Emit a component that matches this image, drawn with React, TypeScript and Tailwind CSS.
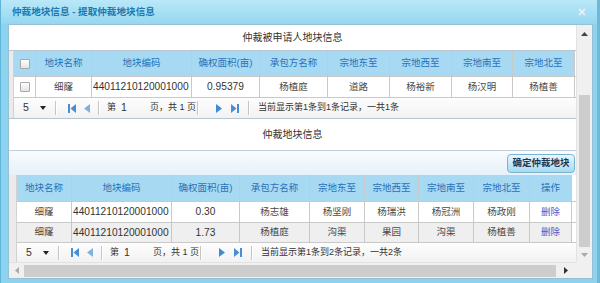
import React from 'react';

const FONT = "font-['Liberation_Sans','Noto_Sans_CJK_SC',sans-serif]";

type Col = { w: string; label: string; num?: boolean; left?: boolean; link?: boolean };

const topCols: Col[] = [
  { w: 'w-[56px]', label: '地块名称' },
  { w: 'w-[100px]', label: '地块编码', num: true, left: true },
  { w: 'w-[68px]', label: '确权面积(亩)', num: true },
  { w: 'w-[68px]', label: '承包方名称' },
  { w: 'w-[62px]', label: '宗地东至' },
  { w: 'w-[62px]', label: '宗地西至' },
  { w: 'w-[61px]', label: '宗地南至' },
  { w: 'w-[62px]', label: '宗地北至' },
];

const bottomCols: Col[] = [
  { w: 'w-[55px]', label: '地块名称' },
  { w: 'w-[100px]', label: '地块编码', num: true, left: true },
  { w: 'w-[68px]', label: '确权面积(亩)', num: true },
  { w: 'w-[70px]', label: '承包方名称' },
  { w: 'w-[55px]', label: '宗地东至' },
  { w: 'w-[54px]', label: '宗地西至' },
  { w: 'w-[55px]', label: '宗地南至' },
  { w: 'w-[56px]', label: '宗地北至' },
  { w: 'w-[42px]', label: '操作', link: true },
];

const topRows = [['细窿', '44011210120001000', '0.95379', '杨植庭', '道路', '杨裕新', '杨汉明', '杨植善']];

const bottomRows = [
  ['细窿', '44011210120001000', '0.30', '杨志雄', '杨坚刚', '杨瑞洪', '杨冠洲', '杨政刚', '删除'],
  ['细窿', '44011210120001000', '1.73', '杨植庭', '沟渠', '果园', '沟渠', '杨植善', '删除'],
];

const CheckBox = () => (
  <div className="w-[10px] h-[10px] border border-[#a8a8a8] rounded-[1px] bg-gradient-to-b from-white to-[#e4e4e4]" />
);

const Sep = ({ className = '' }: { className?: string }) => (
  <div className={`w-[2px] h-[14px] border-l border-l-[#c6c6c6] border-r border-r-white ${className}`} />
);

const FirstIcon = () => (
  <svg width="8" height="9" viewBox="0 0 8 9">
    <rect x="0" y="0" width="2" height="9" fill="#4a8dd4" />
    <polygon points="8,0 8,9 2.5,4.5" fill="#4a8dd4" />
  </svg>
);
const PrevIcon = () => (
  <svg width="7" height="9" viewBox="0 0 7 9">
    <polygon points="7,0 7,9 1,4.5" fill="#7fb1df" />
  </svg>
);
const NextIcon = () => (
  <svg width="7" height="9" viewBox="0 0 7 9">
    <polygon points="0,0 0,9 6,4.5" fill="#3f8bd8" />
  </svg>
);
const LastIcon = () => (
  <svg width="8" height="9" viewBox="0 0 8 9">
    <polygon points="0,0 0,9 5.5,4.5" fill="#4a8dd4" />
    <rect x="6" y="0" width="2" height="9" fill="#4a8dd4" />
  </svg>
);

function Pager({ total }: { total: number }) {
  return (
    <div className="h-full flex items-center bg-gradient-to-b from-[#fdfdfd] to-[#f2f2f2] text-[#333] text-[9px]">
      <div className="w-[38px] pl-[9px] flex items-center">
        <span className="text-[10.5px] w-[6px]">5</span>
        <svg className="ml-[11px]" width="6" height="4" viewBox="0 0 6 4">
          <polygon points="0,0 6,0 3,4" fill="#222" />
        </svg>
      </div>
      <Sep className="ml-[3px]" />
      <div className="ml-[11px] flex items-center">
        <FirstIcon />
      </div>
      <div className="ml-[7px] flex items-center">
        <PrevIcon />
      </div>
      <Sep className="ml-[8px]" />
      <span className="ml-[7px] w-[10px]">第</span>
      <div className="w-[29px] pl-[4px] text-[10.5px]">1</div>
      <div className="ml-[4px] w-[47px] whitespace-nowrap">页，共 1 页</div>
      <Sep />
      <div className="ml-[17px] flex items-center">
        <NextIcon />
      </div>
      <div className="ml-[8px] flex items-center">
        <LastIcon />
      </div>
      <Sep className="ml-[9px]" />
      <span className="ml-[8px] whitespace-nowrap">当前显示第1条到{total}条记录，一共{total}条</span>
    </div>
  );
}

function Cell({ col, children, head }: { col: Col; children: React.ReactNode; head?: boolean }) {
  return (
    <div
      className={`${col.w} shrink-0 h-full flex items-center overflow-hidden whitespace-nowrap border-r border-[#c9c9c9] ${
        col.left && !head ? 'justify-start pl-[1px]' : 'justify-center'
      } ${head ? 'text-[9.5px] text-[#2672b8]' : col.num ? 'text-[10.2px] text-[#333]' : 'text-[9.5px] text-[#4a4a4a]'} ${
        col.link && !head ? 'text-[#5656c8]' : ''
      }`}
    >
      {children}
    </div>
  );
}

function Grid({
  cols,
  rows,
  checkbox,
  stripW,
  headH,
  rowHs,
  pagerH,
  bordered,
}: {
  cols: Col[];
  rows: string[][];
  checkbox?: boolean;
  stripW: string;
  headH: string;
  rowHs: string[];
  pagerH: string;
  bordered?: boolean;
}) {
  return (
    <div className={`flex ${bordered ? 'border-t border-b border-[#b7c7d2]' : ''}`}>
      <div className={`${stripW} shrink-0 bg-[#ebebeb] border-r border-[#d2d2d2]`} />
      <div className="flex-1 flex flex-col">
        <div className={`${headH} flex bg-[#a7d9f2] border-b border-[#c9c9c9]`}>
          {checkbox && (
            <div className="w-[22px] shrink-0 h-full flex items-center justify-center border-r border-[#c9c9c9]">
              <CheckBox />
            </div>
          )}
          {cols.map((c) => (
            <Cell key={c.label} col={c} head>
              {c.label}
            </Cell>
          ))}
          <div className="flex-1 bg-white" />
        </div>
        {rows.map((r, i) => (
          <div key={i} className={`${rowHs[i]} flex border-b border-[#c9c9c9] ${i % 2 === 1 ? 'bg-[#efefef]' : 'bg-white'}`}>
            {checkbox && (
              <div className="w-[22px] shrink-0 h-full flex items-center justify-center border-r border-[#c9c9c9]">
                <CheckBox />
              </div>
            )}
            {cols.map((c, j) => (
              <Cell key={c.label} col={c}>
                {r[j]}
              </Cell>
            ))}
            <div className="flex-1 bg-white" />
          </div>
        ))}
        <div className={pagerH}>
          <Pager total={rows.length} />
        </div>
      </div>
    </div>
  );
}

export default function App() {
  return (
    <div className={`w-[600px] h-[283px] overflow-hidden bg-[#8cd3ef] border-l border-r-[3px] border-l-[#5fb4d8] border-r-[#6fb8d6] ${FONT}`}>
      {/* title bar */}
      <div className="h-[24px] flex items-center justify-between pl-[11px] pr-[11px] bg-gradient-to-b from-[#b9e8f8] to-[#95d7f0]">
        <span className="text-[9.6px] font-bold text-[#1b78b0] whitespace-nowrap">仲裁地块信息 - 提取仲裁地块信息</span>
        <svg width="8" height="8" viewBox="0 0 8 8">
          <path d="M1 1 L7 7 M7 1 L1 7" stroke="#e4eef3" strokeWidth="1.8" />
        </svg>
      </div>

      {/* body panel */}
      <div className="ml-[7px] w-[585px] h-[255px] border border-[#98bfd3] bg-white grid grid-cols-[567px_16px] grid-rows-[237px_16px]">
        <div className="flex flex-col overflow-hidden">
          <div className="h-[25px] shrink-0 flex items-center justify-center text-[10px] text-[#333]">仲裁被申请人地块信息</div>
          <Grid
            cols={topCols}
            rows={topRows}
            checkbox
            stripW="w-[5px]"
            headH="h-[26px]"
            rowHs={['h-[21px]']}
            pagerH="h-[20px]"
            bordered
          />
          <div className="h-[32px] shrink-0 flex items-center justify-center text-[10px] text-[#333] border-b border-[#c4d0d8]">
            仲裁地块信息
          </div>
          <div className="h-[24px] shrink-0 flex items-center justify-end pr-[1px] bg-gradient-to-b from-[#f9fcfe] to-[#e5f1f9]">
            <button className="w-[68px] h-[19px] rounded-[4px] border border-[#79b3d2] bg-gradient-to-b from-[#e9f7fd] to-[#a6daf1] text-[9.5px] font-bold text-[#1d3553] whitespace-nowrap">
              确定仲裁地块
            </button>
          </div>
          <Grid
            cols={bottomCols}
            rows={bottomRows}
            stripW="w-[8px]"
            headH="h-[27px]"
            rowHs={['h-[21px]', 'h-[20px]']}
            pagerH="h-[19px]"
          />
        </div>

        {/* vertical scrollbar */}
        <div className="flex flex-col items-center bg-[#f0f0f0] border-l border-[#e2e2e2]">
          <div className="h-[17px] flex items-center justify-center">
            <svg width="7" height="4" viewBox="0 0 7 4">
              <polygon points="0,4 3.5,0 7,4" fill="#444" />
            </svg>
          </div>
          <div className="mt-[53px] w-[11px] h-[152px] bg-[#cdcdcd]" />
          <div className="flex-1 flex items-center justify-center">
            <svg width="7" height="4" viewBox="0 0 7 4">
              <polygon points="0,0 7,0 3.5,4" fill="#a9a9a9" />
            </svg>
          </div>
        </div>

        {/* horizontal scrollbar */}
        <div className="flex items-center bg-[#f0f0f0] border-t border-[#e2e2e2]">
          <div className="w-[15px] flex items-center justify-center">
            <svg width="4" height="7" viewBox="0 0 4 7">
              <polygon points="4,0 4,7 0,3.5" fill="#aaa" />
            </svg>
          </div>
          <div className="w-[532px] h-[12px] bg-[#cdcdcd]" />
          <div className="flex-1 flex items-center justify-center">
            <svg width="4" height="7" viewBox="0 0 4 7">
              <polygon points="0,0 0,7 4,3.5" fill="#333" />
            </svg>
          </div>
        </div>
        <div className="bg-[#f0f0f0]" />
      </div>
    </div>
  );
}
